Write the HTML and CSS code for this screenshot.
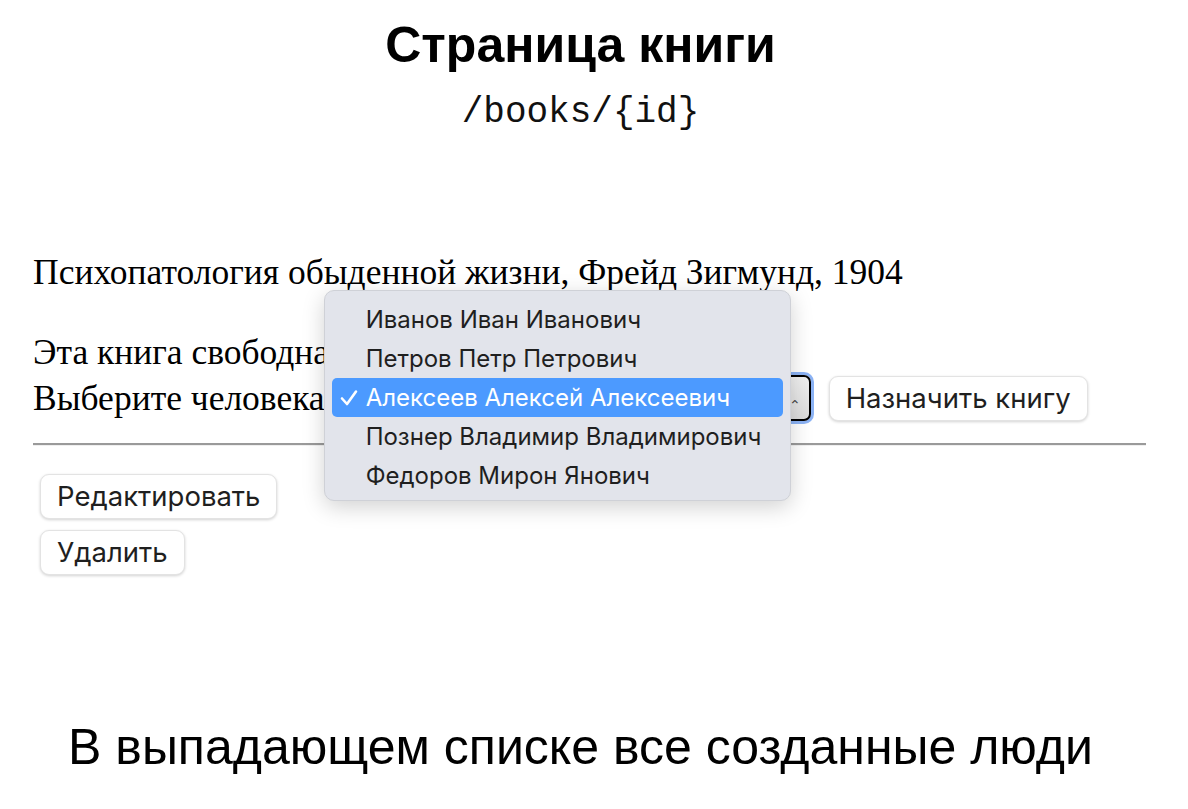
FILE: index.html
```html
<!DOCTYPE html>
<html lang="ru">
<head>
<meta charset="utf-8">
<title>Страница книги</title>
<link rel="stylesheet" href="styles.css">
</head>
<body>
<div class="page">
  <header class="head">
    <h1 class="title">Страница книги</h1>
    <div class="route">/books/{id}</div>
  </header>

  <main class="content">
    <p class="book">Психопатология обыденной жизни, Фрейд Зигмунд, 1904</p>
    <div class="status">Эта книга свободна</div>
    <div class="assign">
      <span class="label">Выберите человека</span>
      <span class="select-wrap">
        <span class="select"><span class="arrows">⌃</span></span>
        <ul class="popup">
          <li class="opt">Иванов Иван Иванович</li>
          <li class="opt">Петров Петр Петрович</li>
          <li class="opt sel"><svg class="check" width="18" height="18" viewBox="0 0 18 18"><polyline points="2,9.5 7,15 16,2.5" fill="none" stroke="#fff" stroke-width="2.6" stroke-linecap="round" stroke-linejoin="round"/></svg>Алексеев Алексей Алексеевич</li>
          <li class="opt">Познер Владимир Владимирович</li>
          <li class="opt">Федоров Мирон Янович</li>
        </ul>
      </span>
      <button class="btn">Назначить книгу</button>
    </div>
    <hr class="rule">
    <div class="actions">
      <button class="btn">Редактировать</button>
      <button class="btn">Удалить</button>
    </div>
  </main>

  <footer class="caption">В выпадающем списке все созданные люди</footer>
</div>
</body>
</html>
```

FILE: styles.css
```css
* { box-sizing: border-box; }
html, body { margin: 0; padding: 0; background: #fff; }
body { width: 1188px; height: 809px; overflow: hidden; color: #000; }

.page { display: flex; flex-direction: column; height: 809px; }

.head { display: flex; flex-direction: column; align-items: center; padding-top: 16px; padding-right: 27px; }
.title {
  margin: 0;
  font-family: "Liberation Sans", Arial, sans-serif;
  font-weight: bold;
  font-size: 50px;
  line-height: 58px;
}
.route {
  margin-top: 17px;
  font-family: "Liberation Mono", "Courier New", monospace;
  font-size: 36px;
  line-height: 44px;
  color: #111;
}

.content { padding: 0 42px 0 33px; margin-top: 115px; }

.book {
  margin: 0;
  font-family: "Liberation Serif", "Times New Roman", serif;
  font-size: 35.5px;
  line-height: 45px;
}
.status, .assign {
  font-family: "Liberation Serif", "Times New Roman", serif;
  font-size: 35.5px;
  line-height: 45px;
}
.status { margin-top: 35px; }
.assign { display: flex; align-items: center; height: 46px; }
.label { white-space: nowrap; }

.select-wrap { position: relative; display: inline-block; margin-left: 10px; }
.select {
  display: block;
  width: 476px;
  height: 46px;
  border: 2px solid #000;
  border-radius: 7px;
  background: linear-gradient(#f0f0f0, #dcdcdc);
  box-shadow: 0 0 0 3px #8cb3f5;
  position: relative;
}
.arrows { position: absolute; right: 8px; top: 6px; font-size: 14px; color: #444; font-family: "DejaVu Sans", sans-serif; }

.popup {
  position: absolute;
  left: -11px;
  top: -85px;
  width: 467px;
  height: 211px;
  margin: 0;
  padding: 9px 7px;
  list-style: none;
  background: #e2e4eb;
  border: 1px solid #cfd1d7;
  border-radius: 10px;
  box-shadow: 0 6px 22px rgba(0,0,0,0.18);
  display: flex;
  flex-direction: column;
}
.opt {
  position: relative;
  height: 39px;
  line-height: 39px;
  padding-left: 34px;
  font-family: Inter, "Noto Sans", sans-serif;
  font-size: 24px;
  color: #1f1f1f;
  border-radius: 5px;
  white-space: nowrap;
}
.opt.sel { background: #4c9aff; color: #fff; }
.check { position: absolute; left: 8px; top: 11px; }

.btn {
  font-family: Inter, "Noto Sans", sans-serif;
  font-size: 27.5px;
  color: #1f1f1f;
  background: #fff;
  border: 1px solid #e3e3e3;
  border-radius: 9px;
  box-shadow: 0 1px 3px rgba(0,0,0,0.18);
  height: 45px;
  padding: 0 16px;
  line-height: 43px;
}
.assign .btn { margin-left: 18px; }

.rule {
  margin: 22px 0 0 0;
  border: 0;
  height: 3px;
  border-top: 2px solid #9a9a9a;
  border-bottom: 1px solid #efefef;
}

.actions { display: flex; flex-direction: column; align-items: flex-start; gap: 11px; margin-top: 28px; padding-left: 7px; }

.caption {
  margin-top: auto;
  margin-bottom: 34px;
  padding-right: 27px;
  text-align: center;
  font-family: "Liberation Sans", Arial, sans-serif;
  font-size: 50px;
  line-height: 56px;
}
```
